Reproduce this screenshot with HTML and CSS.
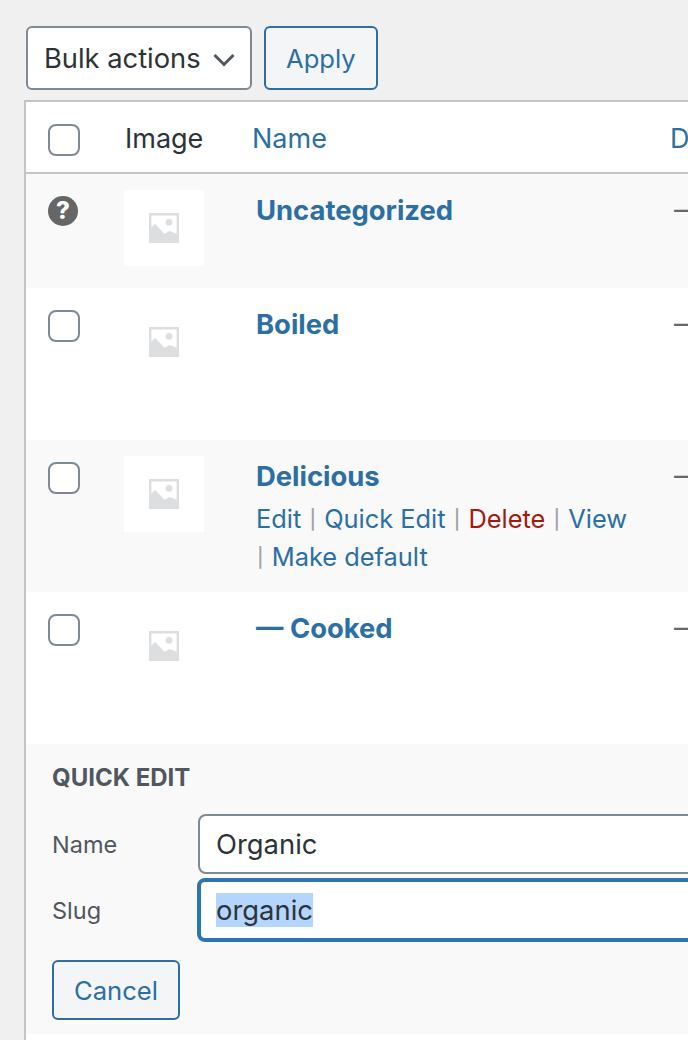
FILE: index.html
```html
<!DOCTYPE html>
<html lang="en">
<head>
    <meta charset="UTF-8">
    <title>Categories</title>
    <link rel="stylesheet" href="styles.css">
</head>
<body>

<div class="tablenav">
    <div class="select">
        <span>Bulk actions</span>
        <svg class="chevron" viewBox="0 0 22 14" width="22" height="14"><path d="M1.500 2 L11 11.500 L20.500 2" fill="none" stroke="#50575e" stroke-width="3"/></svg>
    </div>
    <button class="button">Apply</button>
</div>

<table class="terms">
    <thead>
        <tr>
            <th class="col-cb"><span class="checkbox"></span></th>
            <th class="col-image">Image</th>
            <th class="col-name"><a href="#">Name</a></th>
            <th class="col-desc"><a href="#">Description</a></th>
        </tr>
    </thead>
    <tbody>
        <tr class="alt">
            <td class="col-cb"><span class="help">?</span></td>
            <td class="col-image"><div class="thumb"><svg viewBox="0 0 30 30" width="30" height="30"><path fill="#dddee0" fill-rule="evenodd" d="M0 0H30V30H0Z M2.400 2.400V14.500L6.200 11L15.500 20.700L20.700 18L27.600 20.700V2.400Z"/><circle cx="20" cy="9.300" r="3.400" fill="#dddee0"/></svg></div></td>
            <td class="col-name">
                <a class="row-title" href="#">Uncategorized</a>
                <div class="row-actions hidden"><a href="#">Edit</a></div>
            </td>
            <td class="col-desc">—</td>
        </tr>
        <tr>
            <td class="col-cb"><span class="checkbox"></span></td>
            <td class="col-image"><div class="thumb"><svg viewBox="0 0 30 30" width="30" height="30"><path fill="#dddee0" fill-rule="evenodd" d="M0 0H30V30H0Z M2.400 2.400V14.500L6.200 11L15.500 20.700L20.700 18L27.600 20.700V2.400Z"/><circle cx="20" cy="9.300" r="3.400" fill="#dddee0"/></svg></div></td>
            <td class="col-name">
                <a class="row-title" href="#">Boiled</a>
                <div class="row-actions hidden"><a href="#">Edit</a><br><a href="#">View</a></div>
            </td>
            <td class="col-desc">—</td>
        </tr>
        <tr class="alt">
            <td class="col-cb"><span class="checkbox"></span></td>
            <td class="col-image"><div class="thumb"><svg viewBox="0 0 30 30" width="30" height="30"><path fill="#dddee0" fill-rule="evenodd" d="M0 0H30V30H0Z M2.400 2.400V14.500L6.200 11L15.500 20.700L20.700 18L27.600 20.700V2.400Z"/><circle cx="20" cy="9.300" r="3.400" fill="#dddee0"/></svg></div></td>
            <td class="col-name">
                <a class="row-title" href="#">Delicious</a>
                <div class="row-actions">
                    <a href="#">Edit</a> <span class="sep">|</span> <a href="#">Quick Edit</a> <span class="sep">|</span> <a class="delete" href="#">Delete</a> <span class="sep">|</span> <a href="#">View</a><br>
                    <span class="sep">|</span> <a href="#">Make default</a>
                </div>
            </td>
            <td class="col-desc">—</td>
        </tr>
        <tr>
            <td class="col-cb"><span class="checkbox"></span></td>
            <td class="col-image"><div class="thumb"><svg viewBox="0 0 30 30" width="30" height="30"><path fill="#dddee0" fill-rule="evenodd" d="M0 0H30V30H0Z M2.400 2.400V14.500L6.200 11L15.500 20.700L20.700 18L27.600 20.700V2.400Z"/><circle cx="20" cy="9.300" r="3.400" fill="#dddee0"/></svg></div></td>
            <td class="col-name">
                <a class="row-title" href="#">— Cooked</a>
                <div class="row-actions hidden"><a href="#">Edit</a><br><a href="#">View</a></div>
            </td>
            <td class="col-desc">—</td>
        </tr>
        <tr class="alt">
            <td colspan="4" class="quick-edit">
                <h4>QUICK EDIT</h4>
                <div class="field">
                    <span class="field-label">Name</span>
                    <div class="input">Organic</div>
                </div>
                <div class="field field-focus">
                    <span class="field-label">Slug</span>
                    <div class="input focus"><span class="selected">organic</span></div>
                </div>
                <button class="button">Cancel</button>
            </td>
        </tr>
        <tr><td colspan="4" class="filler"></td></tr>
    </tbody>
</table>

</body>
</html>
```

FILE: styles.css
```css
html, body {
    overflow: hidden;
}

body {
    margin: 0;
    height: 1040px;
    background-color: #f0f0f1;
    color: #2c3338;
    font-family: Inter, "Noto Sans", sans-serif;
    font-size: 27px;
}

a {
    color: #2c6fa3;
    text-decoration: none;
}

.tablenav {
    display: flex;
    gap: 12px;
    padding: 26px 0 10px 26px;
}

.select {
    display: flex;
    align-items: center;
    justify-content: space-between;
    box-sizing: border-box;
    width: 226px;
    height: 64px;
    padding: 0 15px 0 16px;
    background: #fff;
    border: 2px solid #7e8993;
    border-radius: 6px;
    font-size: 27.300px;
}

.chevron {
    margin-top: 4px;
}

.button {
    height: 64px;
    padding: 0 20px;
    background: #f3f5f6;
    border: 2px solid #2c6fa3;
    border-radius: 6px;
    color: #2c6fa3;
    font-family: inherit;
    font-size: 25.600px;
}

.terms {
    table-layout: fixed;
    width: 900px;
    margin-left: 24px;
    border-collapse: separate;
    border-spacing: 0;
    background: #fff;
    border: 2px solid #c3c4c7;
    border-right: none;
}

.terms th {
    height: 72px;
    padding: 2px 12px 0;
    box-sizing: border-box;
    border-bottom: 2px solid #c3c4c7;
    text-align: left;
    font-weight: 400;
}

.terms td {
    padding: 16px;
    vertical-align: top;
    box-sizing: border-box;
}

.terms th.col-cb,
.terms td.col-cb {
    width: 80px;
    padding: 0 0 0 22px;
}

.terms th.col-cb {
    padding-top: 6px;
}

.terms th.col-image,
.terms td.col-image {
    width: 134px;
    padding-left: 18px;
    padding-right: 0;
}

.terms th.col-image {
    padding-left: 19px;
}

.terms th.col-name,
.terms td.col-name {
    width: 418px;
}

.terms th.col-desc {
    width: 268px;
}

.terms td.col-desc {
    padding-top: 19px;
    color: #646970;
}

.alt td {
    background: #f9f9f9;
}

.checkbox {
    display: block;
    box-sizing: border-box;
    width: 32px;
    height: 32px;
    background: #fff;
    border: 2px solid #7e8993;
    border-radius: 8px;
}

.terms td .checkbox {
    margin-top: 22px;
}

.help {
    display: block;
    width: 30px;
    height: 30px;
    margin-top: 22px;
    background: #666;
    border-radius: 50%;
    color: #fff;
    font-size: 24px;
    font-weight: 800;
    line-height: 30px;
    text-align: center;
}

.thumb {
    display: flex;
    align-items: center;
    justify-content: center;
    width: 80px;
    height: 76px;
    background: #fff;
}

.row-title {
    display: block;
    margin-top: 2px;
    font-size: 27.400px;
    font-weight: 700;
    line-height: 36px;
}

.row-actions {
    margin-top: 6px;
    font-size: 25.400px;
    line-height: 38px;
}

.row-actions.hidden {
    visibility: hidden;
}

.sep {
    margin: 0 1px;
    color: #a0a2a5;
    font-size: 19px;
    font-weight: 500;
    line-height: 0;
    vertical-align: 2px;
}

.row-actions .delete {
    color: #a2190f;
}

.terms td.quick-edit {
    height: 290px;
    padding: 20px 26px 0;
}

.quick-edit h4 {
    margin: 0 0 22px;
    color: #50575e;
    font-size: 24px;
    font-weight: 700;
    line-height: 28px;
}

.field {
    display: flex;
    align-items: center;
    height: 60px;
}

.field-focus {
    height: 64px;
    margin-top: 4px;
}

.field-label {
    width: 146px;
    color: #50575e;
    font-size: 23.500px;
}

.input {
    box-sizing: border-box;
    width: 600px;
    height: 60px;
    padding: 0 16px;
    background: #fff;
    border: 2px solid #7e8993;
    border-radius: 8px;
    font-size: 27.400px;
    line-height: 56px;
}

.input.focus {
    height: 64px;
    margin-left: -1px;
    padding: 0 15px;
    border: 4px solid #2c76b0;
    line-height: 56px;
}

.selected {
    background: #b4d5fe;
}

.quick-edit .button {
    height: 60px;
    margin-top: 18px;
}

.terms td.filler {
    height: 40px;
    padding: 0;
}
```
